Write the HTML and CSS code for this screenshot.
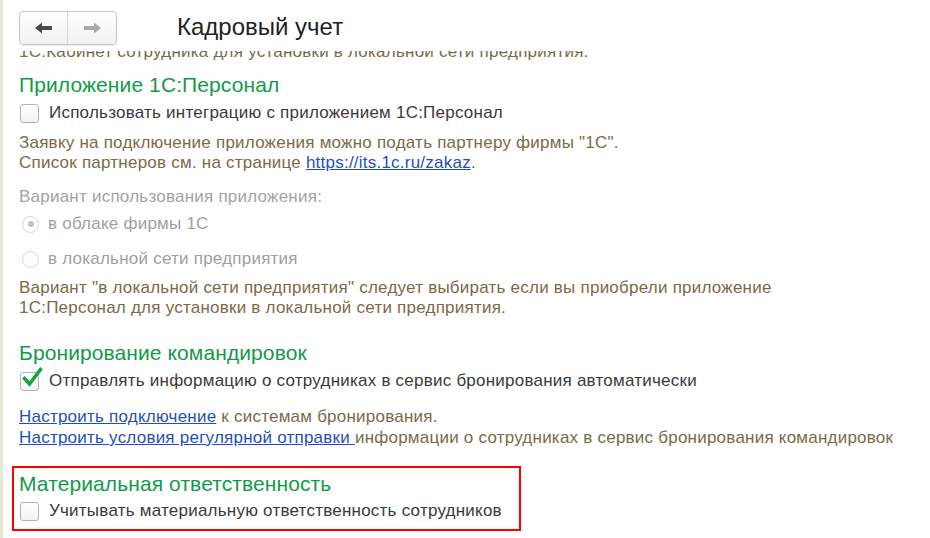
FILE: index.html
```html
<!DOCTYPE html>
<html lang="ru">
<head>
<meta charset="utf-8">
<title>Кадровый учет</title>
<link rel="stylesheet" href="styles.css">
</head>
<body>
<div class="frame">
  <header class="topbar">
    <div class="nav">
      <button class="nav-btn back" type="button" aria-label="Назад">
        <svg width="18" height="12" viewBox="0 0 18 12"><path d="M0 6 L7 0.5 L7 4 L17 4 L17 8 L7 8 L7 11.5 Z" fill="#4a4a4a"/></svg>
      </button>
      <button class="nav-btn fwd" type="button" aria-label="Вперед">
        <svg width="18" height="12" viewBox="0 0 18 12"><path d="M18 6 L11 0.5 L11 4 L1 4 L1 8 L11 8 L11 11.5 Z" fill="#a8a8a8"/></svg>
      </button>
    </div>
    <h1 class="title">Кадровый учет</h1>
  </header>

  <main class="content">
    <p class="note clipped">1С:Кабинет сотрудника для установки в локальной сети предприятия.</p>

    <h2 class="group-title g1">Приложение 1С:Персонал</h2>
    <label class="check-row cr1"><span class="box"></span><span class="label">Использовать интеграцию с приложением 1С:Персонал</span></label>

    <p class="note n1">Заявку на подключение приложения можно подать партнеру фирмы "1С".<br>Список партнеров см. на странице <a class="link" href="#">https://its.1c.ru/zakaz</a>.</p>

    <p class="disabled-caption">Вариант использования приложения:</p>
    <label class="radio-row r1"><span class="radio on"></span><span class="label dim">в облаке фирмы 1С</span></label>
    <label class="radio-row r2"><span class="radio"></span><span class="label dim">в локальной сети предприятия</span></label>

    <p class="note n2">Вариант "в локальной сети предприятия" следует выбирать если вы приобрели приложение<br>1С:Персонал для установки в локальной сети предприятия.</p>

    <h2 class="group-title g2">Бронирование командировок</h2>
    <label class="check-row cr2"><span class="box checked"><svg class="tick" width="22" height="22" viewBox="0 0 22 22"><path d="M3.5 11.5 L8.5 17 L19.5 2.5" fill="none" stroke="#17a33d" stroke-width="3.4" stroke-linecap="square"/></svg></span><span class="label">Отправлять информацию о сотрудниках в сервис бронирования автоматически</span></label>

    <p class="note links"><a class="link" href="#">Настроить подключение</a> к системам бронирования.<br><a class="link" href="#">Настроить условия регулярной отправки </a>информации о сотрудниках в сервис бронирования командировок</p>

    <section class="highlight">
      <h2 class="group-title g3">Материальная ответственность</h2>
      <label class="check-row cr3"><span class="box"></span><span class="label">Учитывать материальную ответственность сотрудников</span></label>
    </section>
  </main>
</div>
</body>
</html>
```

FILE: styles.css
```css
html, body {
  margin: 0;
  padding: 0;
  background: #ffffff;
}

body {
  font-family: "Liberation Sans", Arial, sans-serif;
  width: 930px;
  height: 538px;
  overflow: hidden;
}

.frame {
  height: 538px;
  border-left: 3px solid #e6e7d3;
  box-sizing: border-box;
  display: flex;
  flex-direction: column;
  overflow: hidden;
}

.topbar {
  height: 51px;
  flex: none;
  display: flex;
  align-items: flex-start;
  padding-left: 16px;
  background: #ffffff;
  position: relative;
  z-index: 2;
}

.nav {
  display: flex;
  margin-top: 11px;
  height: 32px;
  border: 1px solid #c6c6c6;
  border-radius: 4px;
  background: linear-gradient(#ffffff, #f1f1f1);
  box-shadow: 0 1px 1px rgba(0,0,0,0.08);
  overflow: hidden;
}

.nav-btn {
  width: 48px;
  height: 32px;
  border: 0;
  padding: 0;
  margin: 0;
  background: transparent;
  display: flex;
  align-items: center;
  justify-content: center;
}

.nav-btn.back {
  border-right: 1px solid #d6d6d6;
}

.title {
  margin: 12px 0 0 60px;
  font-weight: normal;
  font-size: 24px;
  line-height: 30px;
  color: #222222;
}

.content {
  padding-left: 16px;
  color: #333333;
  font-size: 17px;
  letter-spacing: 0.23px;
  line-height: 20px;
}

.content p {
  margin: 0;
}

.note {
  color: #7b6a46;
}

.clipped {
  margin-top: -9px !important;
}

.group-title {
  margin: 0;
  font-weight: normal;
  font-size: 21px;
  letter-spacing: 0.1px;
  line-height: 24px;
  color: #119b48;
}

.g1 { margin-top: 11px; }
.g2 { margin-top: 23px; }

.check-row, .radio-row {
  display: flex;
  align-items: center;
  height: 26px;
}

.cr1 { margin-top: 3px; }
.cr2 { margin-top: 3px; }
.cr3 { margin-top: 2px; }

.box {
  width: 17px;
  height: 17px;
  margin-left: 1px;
  border: 1px solid #b3b3b3;
  border-radius: 3px;
  background: linear-gradient(#ffffff, #f3f3f3);
  flex: none;
  position: relative;
}

.tick {
  position: absolute;
  left: 0;
  top: -6px;
}

.label {
  margin-left: 10px;
  color: #3a3a3a;
  white-space: nowrap;
}

.label.dim {
  color: #9f9f9f;
  margin-left: 9px;
}

.n1 { margin-top: 7px !important; }

.disabled-caption {
  margin-top: 14px !important;
  color: #a3a3a3;
}

.r1 { margin-top: 4px; }
.r2 { margin-top: 9px; }

.radio {
  width: 15px;
  height: 15px;
  margin-left: 3px;
  border: 1px solid #d3d3d3;
  border-radius: 50%;
  background: #ffffff;
  flex: none;
  display: flex;
  align-items: center;
  justify-content: center;
}

.radio.on::after {
  content: "";
  width: 6px;
  height: 6px;
  border-radius: 50%;
  background: #c2c2c2;
}

.n2 { margin-top: 6px !important; }

.links {
  margin-top: 12px !important;
  line-height: 21px;
}

.link {
  color: #1f4fbf;
  text-decoration: underline;
}

.highlight {
  margin-top: 18px;
  margin-left: -7px;
  width: 509px;
  box-sizing: border-box;
  border: 2px solid #ff0000;
  padding: 4px 0 5px 5px;
}
```
